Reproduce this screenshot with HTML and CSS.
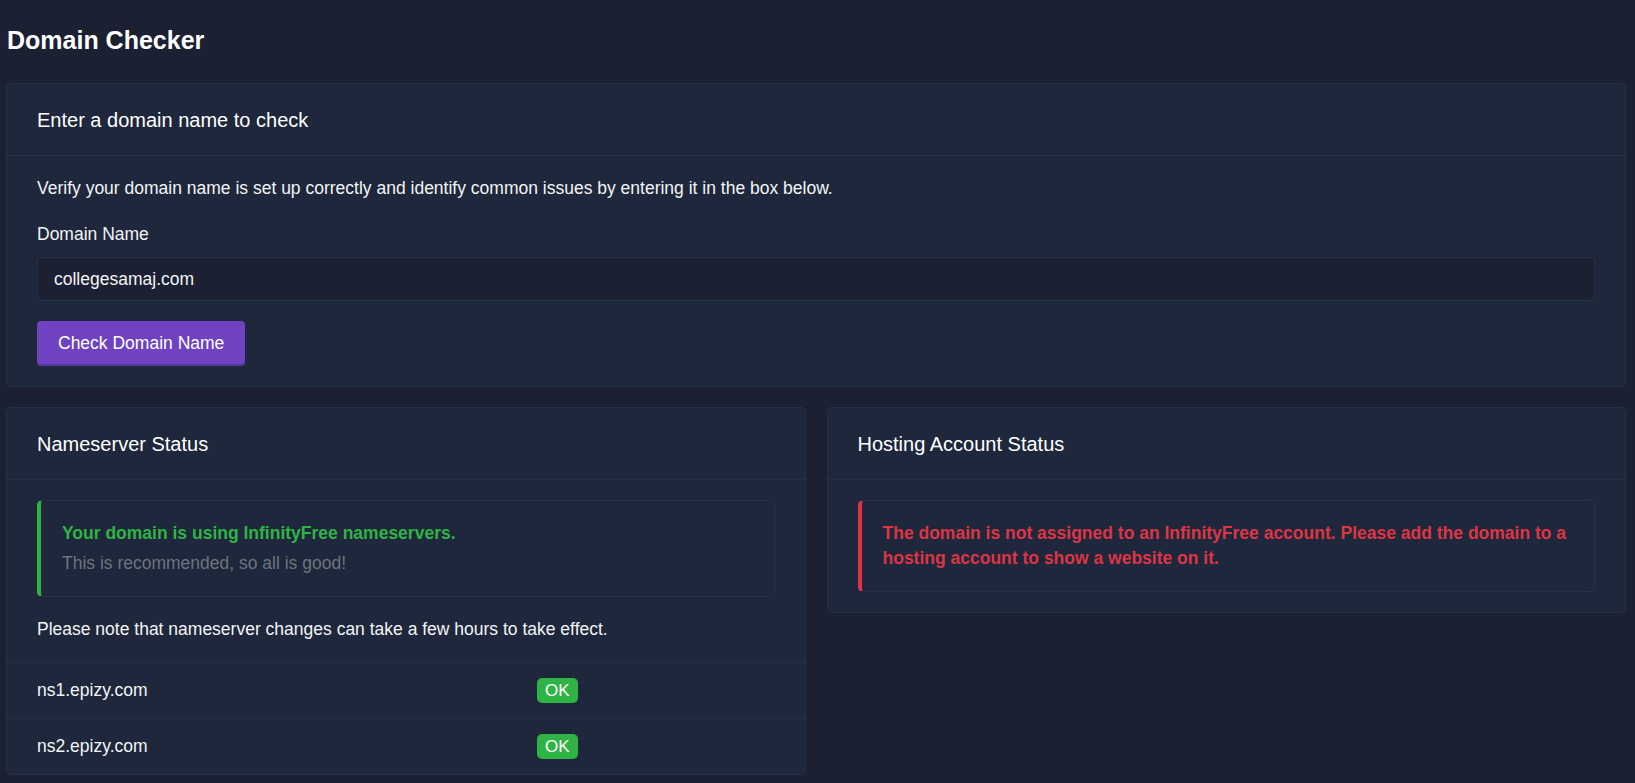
FILE: index.html
```html
<!DOCTYPE html>
<html lang="en">
<head>
<meta charset="utf-8">
<title>Domain Checker</title>
<link rel="stylesheet" href="styles.css">
</head>
<body>
<div class="page">
  <h1 class="page-title">Domain Checker</h1>

  <section class="card">
    <div class="card-header">Enter a domain name to check</div>
    <div class="card-body">
      <p class="intro">Verify your domain name is set up correctly and identify common issues by entering it in the box below.</p>
      <label class="field-label" for="domain">Domain Name</label>
      <input class="field-input" id="domain" type="text" value="collegesamaj.com">
      <button class="btn-check" type="button">Check Domain Name</button>
    </div>
  </section>

  <div class="status-grid">
    <section class="card">
      <div class="card-header">Nameserver Status</div>
      <div class="card-body">
        <div class="callout callout-success">
          <div class="callout-title">Your domain is using InfinityFree nameservers.</div>
          <p class="callout-text">This is recommended, so all is good!</p>
        </div>
        <p class="note">Please note that nameserver changes can take a few hours to take effect.</p>
      </div>
      <div class="ns-row">
        <div class="ns-name">ns1.epizy.com</div>
        <div class="ns-status"><span class="badge-ok">OK</span></div>
      </div>
      <div class="ns-row">
        <div class="ns-name">ns2.epizy.com</div>
        <div class="ns-status"><span class="badge-ok">OK</span></div>
      </div>
    </section>

    <section class="card">
      <div class="card-header">Hosting Account Status</div>
      <div class="card-body">
        <div class="callout callout-danger">
          <div class="callout-error">The domain is not assigned to an InfinityFree account. Please add the domain to a hosting account to show a website on it.</div>
        </div>
      </div>
    </section>
  </div>
</div>
</body>
</html>
```

FILE: styles.css
```css
* { box-sizing: border-box; }

html, body {
  margin: 0;
  padding: 0;
  background: #1c2033;
}

body {
  font-family: "Liberation Sans", Arial, sans-serif;
  font-size: 17.5px;
  line-height: 25px;
  color: #f3f4f6;
}

.page {
  padding: 25px 9px 0 6px;
}

.page-title {
  margin: 0 0 28px 1px;
  font-size: 25px;
  line-height: 30px;
  font-weight: bold;
  color: #ffffff;
}

.card {
  background: #1e273b;
  border: 1px solid #263149;
  border-radius: 5px;
  overflow: hidden;
}

.card-header {
  padding: 21px 30px 20px;
  font-size: 20px;
  line-height: 30px;
  color: #ffffff;
  border-bottom: 1px solid #263149;
}

.card-body {
  padding: 20px 30px;
}

.intro {
  margin: 0 0 21px;
}

.field-label {
  display: block;
  margin-bottom: 10px;
}

.field-input {
  display: block;
  width: 100%;
  height: 44px;
  padding: 9px 16px;
  font-family: inherit;
  font-size: 17.5px;
  line-height: 24px;
  color: #f3f4f6;
  background: #1c2033;
  border: 1px solid #263149;
  border-radius: 5px;
  outline: none;
}

.btn-check {
  display: block;
  margin-top: 20px;
  height: 45px;
  padding: 0 21px;
  font-family: inherit;
  font-size: 17.5px;
  color: #ffffff;
  background: #6f42c1;
  border: none;
  border-radius: 4px;
  box-shadow: inset 0 -2px 0 rgba(0, 0, 0, 0.18);
}

.status-grid {
  display: grid;
  grid-template-columns: 1fr 1fr;
  gap: 21px;
  margin-top: 20px;
  align-items: start;
}

.callout {
  border: 1px solid #263149;
  border-radius: 5px;
  padding: 20px 20px 20px 21px;
}

.callout-success {
  border-left: 4px solid #2fb344;
}

.callout-danger {
  border-left: 4px solid #dc3545;
  padding-left: 21px;
}

.callout-title {
  font-weight: bold;
  color: #2fb344;
  margin-bottom: 5px;
}

.callout-text {
  margin: 0;
  color: #6c757d;
}

.callout-error {
  font-weight: bold;
  line-height: 25px;
  color: #dc3545;
}

.note {
  margin: 20px 0 0;
}

.ns-row {
  display: grid;
  grid-template-columns: 500px 1fr;
  align-items: center;
  height: 56px;
  border-top: 1px solid #263149;
}

.ns-name {
  padding-left: 30px;
}

.ns-status {
  padding-left: 30px;
}

.badge-ok {
  display: inline-block;
  padding: 0 8px;
  height: 25px;
  line-height: 25px;
  border-radius: 5px;
  background: #2fb344;
  color: #ffffff;
  font-size: 17px;
  vertical-align: middle;
}
```
